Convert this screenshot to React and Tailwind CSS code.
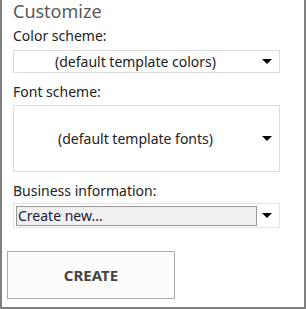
export default function App() {
  const Arrow = () => (
    <svg width="10" height="5" viewBox="0 0 10 5" className="shrink-0">
      <polygon points="0,0 10,0 5,5" fill="#000" />
    </svg>
  );

  return (
    <div
      className="w-[306px] h-[309px] bg-white border-l-2 border-r-2 border-b-2 border-[#808080] overflow-hidden text-[#222]"
      style={{ fontFamily: '"Segoe UI", "Noto Sans", sans-serif' }}
    >
      <div className="pl-[11px] pr-[24px]">
        <div className="text-[18px] leading-[22px] text-[#595959]">Customize</div>

        <div className="text-[14px] leading-[19px] mt-[4px]">Color scheme:</div>
        <div className="mt-[5px] h-[23px] border border-[#dcdcdc] flex items-center pr-[2px]">
          <div className="flex-1 text-center text-[14px]">(default template colors)</div>
          <div className="w-[20px] flex justify-center"><Arrow /></div>
        </div>

        <div className="text-[14px] leading-[19px] mt-[9px]">Font scheme:</div>
        <div className="mt-[4px] h-[67px] border border-[#dcdcdc] flex items-center pr-[2px]">
          <div className="flex-1 text-center text-[14px]">(default template fonts)</div>
          <div className="w-[20px] flex justify-center"><Arrow /></div>
        </div>

        <div className="text-[14px] leading-[19px] mt-[9px]">Business information:</div>
        <div className="mt-[3px] h-[25px] border border-[#e4e4e4] flex items-center pl-[2px] pr-[2px]">
          <div className="w-[241px] h-[20px] bg-[#f0f0f0] border border-[#999] flex items-center pl-[1px] text-[14px] text-[#1a1a3a]">
            Create new...
          </div>
          <div className="flex-1 flex justify-center"><Arrow /></div>
        </div>
      </div>

      <div className="pl-[5px] mt-[23px]">
        <button className="w-[168px] h-[48px] bg-[#fcfcfc] border border-[#aaa] text-[15px] font-bold text-[#444] flex items-center justify-center">
          CREATE
        </button>
      </div>
    </div>
  );
}
